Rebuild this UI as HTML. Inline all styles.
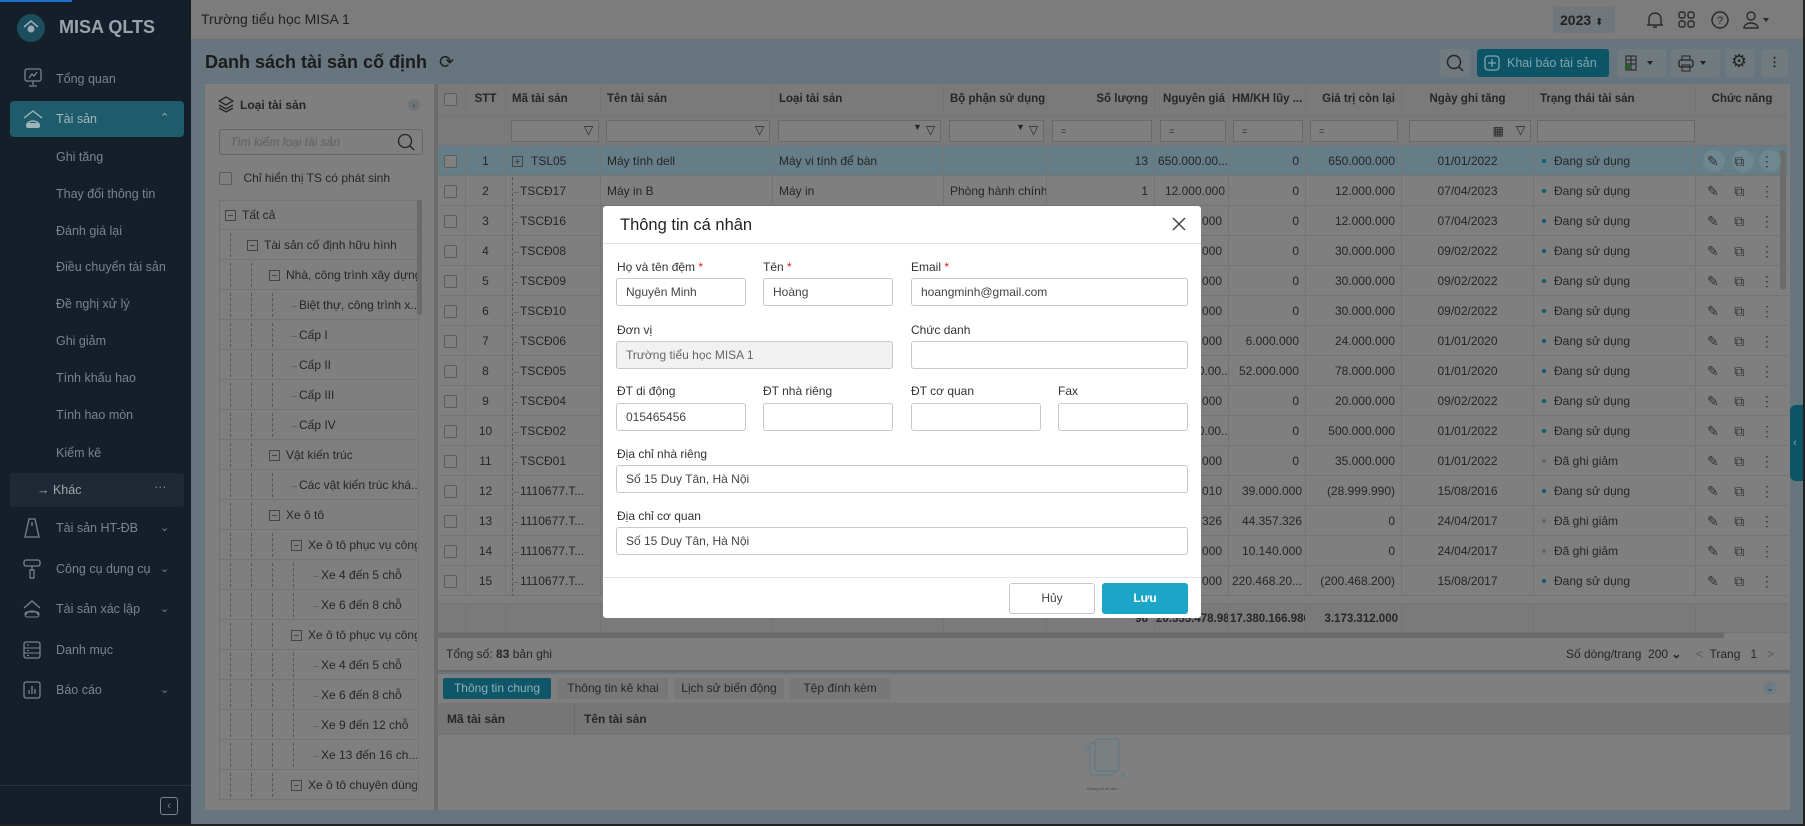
<!DOCTYPE html>
<html><head><meta charset="utf-8"><style>
*{box-sizing:border-box;margin:0;padding:0}
body{width:1805px;height:826px;overflow:hidden;position:relative;font-family:"Liberation Sans",sans-serif;font-size:12.5px;color:#262626;background:#66757e}
.a{position:absolute}
.sb{left:0;top:0;width:191px;height:826px;background:#151f2a;color:#7b848c;font-size:12.5px}
.sb .it{position:absolute;left:56px;white-space:nowrap}
.top{left:191px;top:0;width:1614px;height:40px;background:#7c7c7c;border-bottom:1px solid #707070}
.panel{background:#7f7f7f}
.tr{position:absolute;left:438px;width:1350px;height:30px;border-bottom:1px solid #737373;font-size:12px}
.tr>div{position:absolute;top:0;height:30px;line-height:30px;white-space:nowrap;overflow:hidden;border-right:1px solid #747474;padding:0 6px}
.c0{left:0;width:28px}.c1{left:28px;width:40px;text-align:center}.c2{left:68px;width:95px}.c3{left:163px;width:172px}.c4{left:335px;width:171px}.c5{left:506px;width:103px}.c6{left:609px;width:108px;text-align:right}.c7{left:717px;width:74px;text-align:right}.c8{left:791px;width:77px;text-align:right}.c9{left:868px;width:96px;text-align:right}.c10{left:964px;width:132px;text-align:center}.c11{left:1096px;width:162px}.c12{left:1258px;width:92px;border-right:none!important}
.cb{display:inline-block;width:13px;height:13px;border:1px solid #5d5d5d;border-radius:2px;background:#808080;vertical-align:middle}
.dot{display:inline-block;width:4px;height:4px;border-radius:2px;background:#0b5c70;margin:0 8px 2px 2px;vertical-align:middle}
.dg{background:#666}
.tl{border-left:1px dashed #555;height:30px;display:inline-block;width:8px;vertical-align:middle;position:relative}
.tl:after{content:"";position:absolute;left:0;top:15px;width:6px;border-top:1px solid #666}
.trow{position:absolute;left:219px;width:198px;height:30px;border-bottom:1px solid #737373;line-height:30px;white-space:nowrap;overflow:hidden;font-size:12px}
.vl{position:absolute;top:3px;height:24px;border-left:1px dashed #555}
.mi{display:inline-block;width:11px;height:11px;border:1px solid #444;vertical-align:middle;position:relative;margin-right:6px}
.mi:after{content:"";position:absolute;left:2px;top:4px;width:5px;border-top:1px solid #444}
.pl:before{content:"";position:absolute;left:4px;top:2px;height:5px;border-left:1px solid #444}
.md{left:603px;top:206px;width:598px;height:412px;background:#fff;border-radius:3px;color:#333}
.lb{position:absolute;font-size:12px;color:#333}
.in{position:absolute;height:28px;border:1px solid #c8c8c8;border-radius:3px;line-height:26px;padding-left:9px;font-size:12px;color:#444;background:#fff}
.st{color:#e02020}
</style></head><body>

<div class="a sb">
 <div class="a" style="left:17px;top:14px;width:28px;height:28px;border-radius:14px;background:#1c4d5d"></div>
 <svg class="a" style="left:22px;top:18px" width="18" height="18" viewBox="0 0 18 18"><path d="M2 9 L9 3 L16 9" stroke="#9ab" stroke-width="1.6" fill="none"/><circle cx="9" cy="11" r="3.5" fill="#9ab"/></svg>
 <div class="a" style="left:59px;top:17px;font-size:18px;font-weight:bold;color:#98a3ab">MISA QLTS</div>
 <svg class="a" style="left:24px;top:68px" width="18" height="20" viewBox="0 0 18 20"><rect x="1" y="1" width="16" height="12" rx="2" stroke="#7b848c" fill="none" stroke-width="1.3"/><path d="M5 10 L8 6 L10 8 L13 4 M9 13 V17 M5 18 H13" stroke="#7b848c" fill="none" stroke-width="1.3"/></svg>
 <div class="it" style="top:72px">Tổng quan</div>
 <div class="a" style="left:10px;top:101px;width:174px;height:36px;background:#1e5b6b;border-radius:4px"></div>
 <svg class="a" style="left:22px;top:108px" width="22" height="22" viewBox="0 0 22 22"><path d="M2 10 L11 3 L20 10 M5 17 a6 4 0 0 1 12 0 Z" stroke="#9fb3bb" fill="none" stroke-width="1.4"/><rect x="4" y="15" width="14" height="5" rx="2" fill="#9fb3bb"/></svg>
 <div class="it" style="top:112px;color:#a3b6bd">Tài sản</div>
 <div class="a" style="left:160px;top:111px;color:#a3b6bd;font-size:11px">&#8963;</div>
 <div class="it" style="top:150px">Ghi tăng</div>
 <div class="it" style="top:187px">Thay đổi thông tin</div>
 <div class="it" style="top:224px">Đánh giá lại</div>
 <div class="it" style="top:260px">Điều chuyển tài sản</div>
 <div class="it" style="top:297px">Đề nghị xử lý</div>
 <div class="it" style="top:334px">Ghi giảm</div>
 <div class="it" style="top:371px">Tính khấu hao</div>
 <div class="it" style="top:408px">Tính hao mòn</div>
 <div class="it" style="top:446px">Kiểm kê</div>
 <div class="a" style="left:10px;top:473px;width:174px;height:34px;background:#1f2933;border-radius:3px"></div>
 <div class="it" style="top:483px;left:37px;color:#a0a8ae">→ Khác</div>
 <div class="a" style="left:154px;top:480px;color:#888">···</div>
 <svg class="a" style="left:23px;top:518px" width="18" height="20"><path d="M6 1 L2 19 H16 L12 1 Z M9 4 V8" stroke="#7b848c" fill="none" stroke-width="1.3"/></svg>
 <div class="it" style="top:521px">Tài sản HT-ĐB</div>
 <svg class="a" style="left:23px;top:559px" width="18" height="20"><rect x="1" y="1" width="16" height="6" rx="2" stroke="#7b848c" fill="none" stroke-width="1.3"/><path d="M9 7 V11 M7 11 H11 V19 H7 Z" stroke="#7b848c" fill="none" stroke-width="1.3"/></svg>
 <div class="it" style="top:562px">Công cụ dụng cụ</div>
 <svg class="a" style="left:22px;top:599px" width="20" height="20"><path d="M2 9 L10 2 L18 9 M4 16 a6 4 0 0 1 12 0" stroke="#7b848c" fill="none" stroke-width="1.3"/><rect x="3" y="13" width="14" height="5" rx="2" stroke="#7b848c" fill="none"/></svg>
 <div class="it" style="top:602px">Tài sản xác lập</div>
 <svg class="a" style="left:23px;top:641px" width="18" height="18"><rect x="1" y="1" width="16" height="16" rx="2" stroke="#7b848c" fill="none" stroke-width="1.3"/><path d="M1 7 H17 M1 12 H17 M4 4 H6 M4 9.5 H6 M4 14.5 H6" stroke="#7b848c"/></svg>
 <div class="it" style="top:643px">Danh mục</div>
 <svg class="a" style="left:23px;top:681px" width="18" height="18"><rect x="1" y="1" width="16" height="16" rx="2" stroke="#7b848c" fill="none" stroke-width="1.3"/><path d="M6 13 V9 M9 13 V5 M12 13 V8" stroke="#7b848c" stroke-width="1.3"/></svg>
 <div class="it" style="top:683px">Báo cáo</div>
 <div class="a" style="left:160px;top:521px;font-size:11px">&#8964;</div>
 <div class="a" style="left:160px;top:562px;font-size:11px">&#8964;</div>
 <div class="a" style="left:160px;top:602px;font-size:11px">&#8964;</div>
 <div class="a" style="left:160px;top:683px;font-size:11px">&#8964;</div>
 <div class="a" style="left:0;top:785px;width:191px;border-top:1px solid #27313b"></div>
 <div class="a" style="left:160px;top:797px;width:18px;height:18px;border:1px solid #7b848c;border-radius:3px;font-size:11px;text-align:center;line-height:16px">‹</div>
</div>

<div class="a top">
 <div class="a" style="left:10px;top:11px;font-size:14px;color:#222">Trường tiểu học MISA 1</div>
 <div class="a" style="left:1362px;top:7px;width:62px;height:26px;background:#6f777c;border-radius:3px;font-weight:bold;font-size:14px;line-height:26px;padding-left:7px;color:#222">2023 <span style="font-size:10px;font-weight:normal">⬍</span></div>
 <svg class="a" style="left:1454px;top:10px" width="20" height="20"><path d="M4 15 V9 a6 6 0 0 1 12 0 V15 Z M2 15 H18 M8 17 H12" stroke="#2a2a2a" fill="none" stroke-width="1.4"/></svg>
 <svg class="a" style="left:1486px;top:10px" width="20" height="20"><rect x="2" y="2" width="6" height="6" rx="2" stroke="#2a2a2a" fill="none" stroke-width="1.4"/><rect x="11" y="2" width="6" height="6" rx="2" stroke="#2a2a2a" fill="none" stroke-width="1.4"/><rect x="2" y="11" width="6" height="6" rx="2" stroke="#2a2a2a" fill="none" stroke-width="1.4"/><rect x="11" y="11" width="6" height="6" rx="2" stroke="#2a2a2a" fill="none" stroke-width="1.4"/></svg>
 <svg class="a" style="left:1519px;top:10px" width="20" height="20"><circle cx="10" cy="10" r="8" stroke="#2a2a2a" fill="none" stroke-width="1.4"/><text x="10" y="14" font-size="11" text-anchor="middle" fill="#2a2a2a" font-family="Liberation Sans">?</text></svg>
 <svg class="a" style="left:1552px;top:10px" width="30" height="20"><circle cx="8" cy="6" r="4" stroke="#2a2a2a" fill="none" stroke-width="1.4"/><path d="M1 18 a7 5 0 0 1 14 0 Z" stroke="#2a2a2a" fill="none" stroke-width="1.4"/><path d="M20 8 L26 8 L23 12 Z" fill="#2a2a2a"/></svg>
</div>

<div class="a" style="left:205px;top:52px;font-size:18px;font-weight:bold;color:#1c1c1c;white-space:nowrap">Danh sách tài sản cố định<span style="font-weight:normal;margin-left:12px">⟳</span></div>
<div class="a" style="left:1440px;top:49px;width:30px;height:28px;background:#717a7f;border-radius:3px"></div>
<svg class="a" style="left:1446px;top:54px" width="18" height="18"><circle cx="8" cy="8" r="6.5" stroke="#222" fill="none" stroke-width="1.4"/><path d="M13 13 L17 17" stroke="#222" stroke-width="1.4"/></svg>
<div class="a" style="left:1477px;top:49px;width:132px;height:28px;background:#0d5566;border-radius:3px;color:#7fa5b0;font-size:12.5px;line-height:28px;padding-left:30px">Khai báo tài sản ⌄</div>
<svg class="a" style="left:1484px;top:55px" width="16" height="16"><rect x="1" y="1" width="14" height="14" rx="3" stroke="#7fa5b0" fill="none" stroke-width="1.3"/><path d="M8 4 V12 M4 8 H12" stroke="#7fa5b0" stroke-width="1.3"/></svg>
<div class="a" style="left:1617px;top:49px;width:49px;height:28px;background:#717a7f;border-radius:3px"></div>
<svg class="a" style="left:1624px;top:55px" width="36" height="16"><rect x="2" y="1" width="10" height="14" stroke="#222" fill="none"/><path d="M2 5 H12 M2 9 H12 M7 1 V15" stroke="#222"/><rect x="1" y="9" width="5" height="6" fill="#2a5a2a"/><path d="M23 6 L29 6 L26 10 Z" fill="#222"/></svg>
<div class="a" style="left:1671px;top:49px;width:49px;height:28px;background:#717a7f;border-radius:3px"></div>
<svg class="a" style="left:1678px;top:55px" width="36" height="17"><rect x="1" y="5" width="14" height="7" rx="2" stroke="#222" fill="none" stroke-width="1.3"/><rect x="4" y="1" width="8" height="4" stroke="#222" fill="none"/><rect x="4" y="10" width="8" height="6" stroke="#222" fill="none"/><path d="M22 6 L28 6 L25 10 Z" fill="#222"/></svg>
<div class="a" style="left:1726px;top:49px;width:28px;height:28px;background:#717a7f;border-radius:3px"></div>
<div class="a" style="left:1731px;top:51px;font-size:18px;color:#222">⚙</div>
<div class="a" style="left:1761px;top:49px;width:27px;height:28px;background:#717a7f;border-radius:3px;text-align:center;line-height:26px;font-weight:bold">⋮</div>

<div class="a panel" style="left:205px;top:84px;width:229px;height:726px"></div>
<svg class="a" style="left:218px;top:96px" width="16" height="18"><path d="M8 1 L15 5 L8 9 L1 5 Z M1 9 L8 13 L15 9 M1 12 L8 16 L15 12" stroke="#262626" fill="none" stroke-width="1.3"/></svg>
<div class="a" style="left:240px;top:98px;font-weight:bold;font-size:12px">Loại tài sản</div>
<div class="a" style="left:408px;top:99px;width:12px;height:12px;border-radius:6px;background:#737373;color:#0d5566;font-size:9px;text-align:center;line-height:12px">‹</div>
<div class="a" style="left:219px;top:129px;width:204px;height:26px;border:1px solid #666;border-radius:3px;font-style:italic;color:#606060;font-size:12px;line-height:24px;padding-left:10px">Tìm kiếm loại tài sản</div>
<svg class="a" style="left:397px;top:133px" width="18" height="18"><circle cx="8" cy="8" r="6.5" stroke="#222" fill="none" stroke-width="1.3"/><path d="M13 13 L17 17" stroke="#222" stroke-width="1.3"/></svg>
<div class="a" style="left:219px;top:171px"><span class="cb"></span> <span style="margin-left:8px;font-size:12px">Chỉ hiển thị TS có phát sinh</span></div>
<div class="a" style="left:219px;top:200px;width:200px;height:600px;border:1px solid #747474;border-bottom:none"></div>
<div class="a" style="left:417px;top:200px;width:5px;height:115px;background:#6a6a6a;border-radius:2px"></div>

<div class="trow" style="top:200px;padding-left:6px"><span class="mi"></span>Tất cả</div>
<div class="trow" style="top:230px;padding-left:28px"><div class="vl" style="left:11px"></div><span class="mi"></span>Tài sản cố định hữu hình</div>
<div class="trow" style="top:260px;padding-left:50px"><div class="vl" style="left:11px"></div><div class="vl" style="left:32px"></div><span class="mi"></span>Nhà, công trình xây dựng</div>
<div class="trow" style="top:290px;padding-left:72px"><div class="vl" style="left:11px"></div><div class="vl" style="left:32px"></div><div class="vl" style="left:53px"></div><span class="tl" style="border:none"></span>Biệt thự, công trình x...</div>
<div class="trow" style="top:320px;padding-left:72px"><div class="vl" style="left:11px"></div><div class="vl" style="left:32px"></div><div class="vl" style="left:53px"></div><span class="tl" style="border:none"></span>Cấp I</div>
<div class="trow" style="top:350px;padding-left:72px"><div class="vl" style="left:11px"></div><div class="vl" style="left:32px"></div><div class="vl" style="left:53px"></div><span class="tl" style="border:none"></span>Cấp II</div>
<div class="trow" style="top:380px;padding-left:72px"><div class="vl" style="left:11px"></div><div class="vl" style="left:32px"></div><div class="vl" style="left:53px"></div><span class="tl" style="border:none"></span>Cấp III</div>
<div class="trow" style="top:410px;padding-left:72px"><div class="vl" style="left:11px"></div><div class="vl" style="left:32px"></div><div class="vl" style="left:53px"></div><span class="tl" style="border:none"></span>Cấp IV</div>
<div class="trow" style="top:440px;padding-left:50px"><div class="vl" style="left:11px"></div><div class="vl" style="left:32px"></div><span class="mi"></span>Vật kiến trúc</div>
<div class="trow" style="top:470px;padding-left:72px"><div class="vl" style="left:11px"></div><div class="vl" style="left:32px"></div><div class="vl" style="left:53px"></div><span class="tl" style="border:none"></span>Các vật kiến trúc khá...</div>
<div class="trow" style="top:500px;padding-left:50px"><div class="vl" style="left:11px"></div><div class="vl" style="left:32px"></div><span class="mi"></span>Xe ô tô</div>
<div class="trow" style="top:530px;padding-left:72px"><div class="vl" style="left:11px"></div><div class="vl" style="left:32px"></div><div class="vl" style="left:53px"></div><span class="mi"></span>Xe ô tô phục vụ công ...</div>
<div class="trow" style="top:560px;padding-left:94px"><div class="vl" style="left:11px"></div><div class="vl" style="left:32px"></div><div class="vl" style="left:53px"></div><div class="vl" style="left:74px"></div><span class="tl" style="border:none"></span>Xe 4 đến 5 chỗ</div>
<div class="trow" style="top:590px;padding-left:94px"><div class="vl" style="left:11px"></div><div class="vl" style="left:32px"></div><div class="vl" style="left:53px"></div><div class="vl" style="left:74px"></div><span class="tl" style="border:none"></span>Xe 6 đến 8 chỗ</div>
<div class="trow" style="top:620px;padding-left:72px"><div class="vl" style="left:11px"></div><div class="vl" style="left:32px"></div><div class="vl" style="left:53px"></div><span class="mi"></span>Xe ô tô phục vụ công ...</div>
<div class="trow" style="top:650px;padding-left:94px"><div class="vl" style="left:11px"></div><div class="vl" style="left:32px"></div><div class="vl" style="left:53px"></div><div class="vl" style="left:74px"></div><span class="tl" style="border:none"></span>Xe 4 đến 5 chỗ</div>
<div class="trow" style="top:680px;padding-left:94px"><div class="vl" style="left:11px"></div><div class="vl" style="left:32px"></div><div class="vl" style="left:53px"></div><div class="vl" style="left:74px"></div><span class="tl" style="border:none"></span>Xe 6 đến 8 chỗ</div>
<div class="trow" style="top:710px;padding-left:94px"><div class="vl" style="left:11px"></div><div class="vl" style="left:32px"></div><div class="vl" style="left:53px"></div><div class="vl" style="left:74px"></div><span class="tl" style="border:none"></span>Xe 9 đến 12 chỗ</div>
<div class="trow" style="top:740px;padding-left:94px"><div class="vl" style="left:11px"></div><div class="vl" style="left:32px"></div><div class="vl" style="left:53px"></div><div class="vl" style="left:74px"></div><span class="tl" style="border:none"></span>Xe 13 đến 16 ch...</div>
<div class="trow" style="top:770px;padding-left:72px"><div class="vl" style="left:11px"></div><div class="vl" style="left:32px"></div><div class="vl" style="left:53px"></div><span class="mi"></span>Xe ô tô chuyên dùng</div>

<div class="a" style="left:434px;top:84px;width:4px;height:726px;background:#6c6c6c"></div>

<div class="a panel" style="left:438px;top:84px;width:1352px;height:554px"></div>
<div class="tr" style="top:84px;height:32px;background:#7a7a7a;font-weight:bold;font-size:11.5px"><div class="c0" style="height:32px;line-height:32px"><span class="cb"></span></div><div class="c1">STT</div><div class="c2">Mã tài sản</div><div class="c3">Tên tài sản</div><div class="c4">Loại tài sản</div><div class="c5">Bộ phận sử dụng</div><div class="c6">Số lượng</div><div class="c7" style="padding:0 3px">Nguyên giá</div><div class="c8" style="padding:0 3px">HM/KH lũy ...</div><div class="c9">Giá trị còn lại</div><div class="c10">Ngày ghi tăng</div><div class="c11">Trạng thái tài sản</div><div class="c12" style="text-align:center">Chức năng</div></div>
<div class="tr" style="top:116px;background:#7a7a7a"></div>
<div class="a" style="left:511px;top:120px;width:88px;height:22px;border:1px solid #6a6a6a;background:#7f7f7f"></div>
<div class="a" style="left:606px;top:120px;width:164px;height:22px;border:1px solid #6a6a6a;background:#7f7f7f"></div>
<div class="a" style="left:778px;top:120px;width:163px;height:22px;border:1px solid #6a6a6a;background:#7f7f7f"></div>
<div class="a" style="left:949px;top:120px;width:95px;height:22px;border:1px solid #6a6a6a;background:#7f7f7f"></div>
<div class="a" style="left:1052px;top:120px;width:100px;height:22px;border:1px solid #6a6a6a;background:#7f7f7f;font-size:9px;line-height:20px;padding-left:8px">=</div>
<div class="a" style="left:1160px;top:120px;width:66px;height:22px;border:1px solid #6a6a6a;background:#7f7f7f;font-size:9px;line-height:20px;padding-left:8px">=</div>
<div class="a" style="left:1233px;top:120px;width:70px;height:22px;border:1px solid #6a6a6a;background:#7f7f7f;font-size:9px;line-height:20px;padding-left:8px">=</div>
<div class="a" style="left:1310px;top:120px;width:88px;height:22px;border:1px solid #6a6a6a;background:#7f7f7f;font-size:9px;line-height:20px;padding-left:8px">=</div>
<div class="a" style="left:1409px;top:120px;width:122px;height:22px;border:1px solid #6a6a6a;background:#7f7f7f;text-align:right;padding-right:26px;font-size:12px;line-height:20px">▦</div>
<div class="a" style="left:1537px;top:120px;width:158px;height:22px;border:1px solid #6a6a6a;background:#7f7f7f"></div>
<div class="a" style="left:584px;top:123px;font-size:12px">▽</div><div class="a" style="left:755px;top:123px;font-size:12px">▽</div><div class="a" style="left:913px;top:122px;font-size:9px">▼</div><div class="a" style="left:926px;top:123px;font-size:12px">▽</div><div class="a" style="left:1016px;top:122px;font-size:9px">▼</div><div class="a" style="left:1029px;top:123px;font-size:12px">▽</div><div class="a" style="left:1516px;top:123px;font-size:12px">▽</div>

<div class="tr" style="top:146px;background:#657d86"><div class="c0"><span class="cb"></span></div><div class="c1">1</div><div class="c2"><span class="mi pl" style="margin-right:8px"></span>TSL05</div><div class="c3">Máy tính dell</div><div class="c4">Máy vi tính để bàn</div><div class="c5"></div><div class="c6">13</div><div class="c7" style="padding:0 3px">650.000.00...</div><div class="c8">0</div><div class="c9">650.000.000</div><div class="c10">01/01/2022</div><div class="c11"><span class="dot"></span>Đang sử dụng</div><div class="c12"></div></div>
<div class="tr" style="top:176px"><div class="c0"><span class="cb"></span></div><div class="c1">2</div><div class="c2"><span class="tl"></span>TSCĐ17</div><div class="c3">Máy in B</div><div class="c4">Máy in</div><div class="c5">Phòng hành chính</div><div class="c6">1</div><div class="c7" style="padding:0 3px">12.000.000</div><div class="c8">0</div><div class="c9">12.000.000</div><div class="c10">07/04/2023</div><div class="c11"><span class="dot"></span>Đang sử dụng</div><div class="c12"></div></div>
<div class="tr" style="top:206px"><div class="c0"><span class="cb"></span></div><div class="c1">3</div><div class="c2"><span class="tl"></span>TSCĐ16</div><div class="c3"></div><div class="c4"></div><div class="c5"></div><div class="c6"></div><div class="c7">12.000.000</div><div class="c8">0</div><div class="c9">12.000.000</div><div class="c10">07/04/2023</div><div class="c11"><span class="dot"></span>Đang sử dụng</div><div class="c12"></div></div>
<div class="tr" style="top:236px"><div class="c0"><span class="cb"></span></div><div class="c1">4</div><div class="c2"><span class="tl"></span>TSCĐ08</div><div class="c3"></div><div class="c4"></div><div class="c5"></div><div class="c6"></div><div class="c7">30.000.000</div><div class="c8">0</div><div class="c9">30.000.000</div><div class="c10">09/02/2022</div><div class="c11"><span class="dot"></span>Đang sử dụng</div><div class="c12"></div></div>
<div class="tr" style="top:266px"><div class="c0"><span class="cb"></span></div><div class="c1">5</div><div class="c2"><span class="tl"></span>TSCĐ09</div><div class="c3"></div><div class="c4"></div><div class="c5"></div><div class="c6"></div><div class="c7">30.000.000</div><div class="c8">0</div><div class="c9">30.000.000</div><div class="c10">09/02/2022</div><div class="c11"><span class="dot"></span>Đang sử dụng</div><div class="c12"></div></div>
<div class="tr" style="top:296px"><div class="c0"><span class="cb"></span></div><div class="c1">6</div><div class="c2"><span class="tl"></span>TSCĐ10</div><div class="c3"></div><div class="c4"></div><div class="c5"></div><div class="c6"></div><div class="c7">30.000.000</div><div class="c8">0</div><div class="c9">30.000.000</div><div class="c10">09/02/2022</div><div class="c11"><span class="dot"></span>Đang sử dụng</div><div class="c12"></div></div>
<div class="tr" style="top:326px"><div class="c0"><span class="cb"></span></div><div class="c1">7</div><div class="c2"><span class="tl"></span>TSCĐ06</div><div class="c3"></div><div class="c4"></div><div class="c5"></div><div class="c6"></div><div class="c7">30.000.000</div><div class="c8">6.000.000</div><div class="c9">24.000.000</div><div class="c10">01/01/2020</div><div class="c11"><span class="dot"></span>Đang sử dụng</div><div class="c12"></div></div>
<div class="tr" style="top:356px"><div class="c0"><span class="cb"></span></div><div class="c1">8</div><div class="c2"><span class="tl"></span>TSCĐ05</div><div class="c3"></div><div class="c4"></div><div class="c5"></div><div class="c6"></div><div class="c7">130.000.00...</div><div class="c8">52.000.000</div><div class="c9">78.000.000</div><div class="c10">01/01/2020</div><div class="c11"><span class="dot"></span>Đang sử dụng</div><div class="c12"></div></div>
<div class="tr" style="top:386px"><div class="c0"><span class="cb"></span></div><div class="c1">9</div><div class="c2"><span class="tl"></span>TSCĐ04</div><div class="c3"></div><div class="c4"></div><div class="c5"></div><div class="c6"></div><div class="c7">20.000.000</div><div class="c8">0</div><div class="c9">20.000.000</div><div class="c10">09/02/2022</div><div class="c11"><span class="dot"></span>Đang sử dụng</div><div class="c12"></div></div>
<div class="tr" style="top:416px"><div class="c0"><span class="cb"></span></div><div class="c1">10</div><div class="c2"><span class="tl"></span>TSCĐ02</div><div class="c3"></div><div class="c4"></div><div class="c5"></div><div class="c6"></div><div class="c7">500.000.00...</div><div class="c8">0</div><div class="c9">500.000.000</div><div class="c10">01/01/2022</div><div class="c11"><span class="dot"></span>Đang sử dụng</div><div class="c12"></div></div>
<div class="tr" style="top:446px"><div class="c0"><span class="cb"></span></div><div class="c1">11</div><div class="c2"><span class="tl"></span>TSCĐ01</div><div class="c3"></div><div class="c4"></div><div class="c5"></div><div class="c6"></div><div class="c7">35.000.000</div><div class="c8">0</div><div class="c9">35.000.000</div><div class="c10">01/01/2022</div><div class="c11"><span class="dot dg"></span>Đã ghi giảm</div><div class="c12"></div></div>
<div class="tr" style="top:476px"><div class="c0"><span class="cb"></span></div><div class="c1">12</div><div class="c2"><span class="tl"></span>1110677.T...</div><div class="c3"></div><div class="c4"></div><div class="c5"></div><div class="c6"></div><div class="c7">10.000.010</div><div class="c8" style="padding:0 3px">39.000.000</div><div class="c9">(28.999.990)</div><div class="c10">15/08/2016</div><div class="c11"><span class="dot"></span>Đang sử dụng</div><div class="c12"></div></div>
<div class="tr" style="top:506px"><div class="c0"><span class="cb"></span></div><div class="c1">13</div><div class="c2"><span class="tl"></span>1110677.T...</div><div class="c3"></div><div class="c4"></div><div class="c5"></div><div class="c6"></div><div class="c7">44.357.326</div><div class="c8" style="padding:0 3px">44.357.326</div><div class="c9">0</div><div class="c10">24/04/2017</div><div class="c11"><span class="dot dg"></span>Đã ghi giảm</div><div class="c12"></div></div>
<div class="tr" style="top:536px"><div class="c0"><span class="cb"></span></div><div class="c1">14</div><div class="c2"><span class="tl"></span>1110677.T...</div><div class="c3"></div><div class="c4"></div><div class="c5"></div><div class="c6"></div><div class="c7">10.140.000</div><div class="c8" style="padding:0 3px">10.140.000</div><div class="c9">0</div><div class="c10">24/04/2017</div><div class="c11"><span class="dot dg"></span>Đã ghi giảm</div><div class="c12"></div></div>
<div class="tr" style="top:566px"><div class="c0"><span class="cb"></span></div><div class="c1">15</div><div class="c2"><span class="tl"></span>1110677.T...</div><div class="c3"></div><div class="c4"></div><div class="c5"></div><div class="c6"></div><div class="c7">20.000.000</div><div class="c8" style="padding:0 3px">220.468.20...</div><div class="c9">(200.468.200)</div><div class="c10">15/08/2017</div><div class="c11"><span class="dot"></span>Đang sử dụng</div><div class="c12"></div></div>
<div class="tr" style="top:596px;height:8px;border:none"></div>
<div class="tr" style="top:603px;background:#7a7a7a;font-weight:bold;border-top:1px solid #737373;font-size:11.5px"><div class="c0"></div><div class="c1"></div><div class="c2"></div><div class="c3"></div><div class="c4"></div><div class="c5"></div><div class="c6">96</div><div class="c7" style="padding:0 1px">20.555.478.986</div><div class="c8" style="padding:0 1px">17.380.166.986</div><div class="c9" style="padding:0 3px">3.173.312.000</div><div class="c10"></div><div class="c11"></div><div class="c12"></div></div>
<div class="a" style="left:438px;top:633px;width:1286px;height:5px;background:#6a6a6a;border-radius:2px"></div>
<div class="a" style="left:1780px;top:150px;width:6px;height:140px;background:#6c6c6c;border-radius:3px"></div>

<div class="a" style="left:1703px;top:150px;width:22px;height:22px;border-radius:11px;background:#6f878f"></div>
<div class="a" style="left:1732px;top:150px;width:22px;height:22px;border-radius:11px;background:#6f878f"></div>
<div class="a" style="left:1759px;top:150px;width:22px;height:22px;border-radius:11px;background:#6f878f"></div>
<div class="a" style="left:1707px;top:146px;line-height:30px;font-size:14px;color:#333;white-space:pre">✎    ⧉    ⋮</div>
<div class="a" style="left:1707px;top:176px;line-height:30.0px;font-size:14px;color:#333;white-space:pre">✎    ⧉    ⋮
✎    ⧉    ⋮
✎    ⧉    ⋮
✎    ⧉    ⋮
✎    ⧉    ⋮
✎    ⧉    ⋮
✎    ⧉    ⋮
✎    ⧉    ⋮
✎    ⧉    ⋮
✎    ⧉    ⋮
✎    ⧉    ⋮
✎    ⧉    ⋮
✎    ⧉    ⋮
✎    ⧉    ⋮</div>
<div class="a" style="left:1790px;top:405px;width:15px;height:76px;background:#0d5566;border-radius:6px 0 0 6px;color:#8ab;font-size:11px;line-height:76px;padding-left:3px">‹</div>

<div class="a panel" style="left:438px;top:638px;width:1352px;height:34px;border-bottom:2px solid #6a6a6a"></div>
<div class="a" style="left:446px;top:647px;font-size:12px">Tổng số: <b>83</b> bản ghi</div>
<div class="a" style="left:1566px;top:647px;font-size:12px">Số dòng/trang&nbsp; 200 <b>⌄</b></div>
<div class="a" style="left:1696px;top:647px;font-size:12px"><span style="color:#555">&lt;</span>&nbsp; Trang&nbsp;&nbsp; 1 &nbsp;&nbsp;<span style="color:#555">&gt;</span></div>
<div class="a panel" style="left:438px;top:674px;width:1352px;height:136px"></div>
<div class="a" style="left:443px;top:678px;width:108px;height:21px;background:#0f5668;border-radius:2px;color:#8fb0ba;font-size:12px;text-align:center;line-height:21px">Thông tin chung</div>
<div class="a" style="left:558px;top:678px;width:110px;height:21px;background:#787878;font-size:12px;text-align:center;line-height:21px">Thông tin kê khai</div>
<div class="a" style="left:674px;top:678px;width:110px;height:21px;background:#787878;font-size:12px;text-align:center;line-height:21px">Lịch sử biến động</div>
<div class="a" style="left:790px;top:678px;width:100px;height:21px;background:#787878;font-size:12px;text-align:center;line-height:21px">Tệp đính kèm</div>
<div class="a" style="left:1763px;top:681px;width:14px;height:14px;border-radius:7px;background:#6e7c82;color:#0d5566;font-size:9px;text-align:center;line-height:14px">⌄</div>
<div class="a" style="left:438px;top:703px;width:1352px;height:32px;background:#767676;font-weight:bold;font-size:12px;line-height:32px"><span style="margin-left:9px">Mã tài sản</span><span style="position:absolute;left:136px;border-left:1px solid #6a6a6a;padding-left:9px">Tên tài sản</span></div>
<svg class="a" style="left:1075px;top:735px" width="55" height="60"><rect x="15" y="8" width="24" height="32" rx="2" stroke="#5a7a84" fill="none"/><rect x="20" y="4" width="24" height="32" rx="2" stroke="#5a7a84" fill="#7a7f82"/><circle cx="12" cy="14" r="2" stroke="#5a7a84" fill="none"/><circle cx="48" cy="40" r="1.5" stroke="#5a7a84" fill="none"/><text x="27" y="55" font-size="4" fill="#444" text-anchor="middle" font-family="Liberation Sans">Không có dữ liệu</text></svg>
<div class="a" style="left:0;top:824px;width:1805px;height:2px;background:#222"></div>
<div class="a" style="left:1803px;top:0;width:2px;height:826px;background:#222"></div>
<div class="a" style="left:0;top:0;width:72px;height:2px;background:#1e6fd0"></div>

<div class="a md">
 <div class="a" style="left:17px;top:10px;font-size:16.5px;color:#222">Thông tin cá nhân</div>
 <svg class="a" style="left:569px;top:11px" width="14" height="14"><path d="M1 1 L13 13 M13 1 L1 13" stroke="#444" stroke-width="1.5"/></svg>
 <div class="a" style="left:0;top:37px;width:598px;border-top:1px solid #e2e2e2"></div>
 <div class="lb" style="left:14px;top:54px">Họ và tên đệm <span class="st">*</span></div>
 <div class="lb" style="left:160px;top:54px">Tên <span class="st">*</span></div>
 <div class="lb" style="left:308px;top:54px">Email <span class="st">*</span></div>
 <div class="in" style="left:13px;top:72px;width:130px">Nguyên Minh</div>
 <div class="in" style="left:160px;top:72px;width:130px">Hoàng</div>
 <div class="in" style="left:308px;top:72px;width:277px">hoangminh@gmail.com</div>
 <div class="lb" style="left:14px;top:117px">Đơn vị</div>
 <div class="lb" style="left:308px;top:117px">Chức danh</div>
 <div class="in" style="left:13px;top:135px;width:277px;background:#f1f1f1;color:#666">Trường tiểu học MISA 1</div>
 <div class="in" style="left:308px;top:135px;width:277px"></div>
 <div class="lb" style="left:14px;top:178px">ĐT di động</div>
 <div class="lb" style="left:160px;top:178px">ĐT nhà riêng</div>
 <div class="lb" style="left:308px;top:178px">ĐT cơ quan</div>
 <div class="lb" style="left:455px;top:178px">Fax</div>
 <div class="in" style="left:13px;top:197px;width:130px">015465456</div>
 <div class="in" style="left:160px;top:197px;width:130px"></div>
 <div class="in" style="left:308px;top:197px;width:130px"></div>
 <div class="in" style="left:455px;top:197px;width:130px"></div>
 <div class="lb" style="left:14px;top:241px">Địa chỉ nhà riêng</div>
 <div class="in" style="left:13px;top:259px;width:572px">Số 15 Duy Tân, Hà Nội</div>
 <div class="lb" style="left:14px;top:303px">Địa chỉ cơ quan</div>
 <div class="in" style="left:13px;top:321px;width:572px">Số 15 Duy Tân, Hà Nội</div>
 <div class="a" style="left:0;top:371px;width:598px;border-top:1px solid #e2e2e2"></div>
 <div class="a" style="left:406px;top:377px;width:86px;height:31px;border:1px solid #c8c8c8;border-radius:3px;text-align:center;line-height:29px;font-size:12px;color:#444">Hủy</div>
 <div class="a" style="left:499px;top:377px;width:86px;height:31px;background:#1ba6c9;border-radius:3px;text-align:center;line-height:31px;font-size:12px;color:#fff;font-weight:bold">Lưu</div>
</div>
</body></html>
